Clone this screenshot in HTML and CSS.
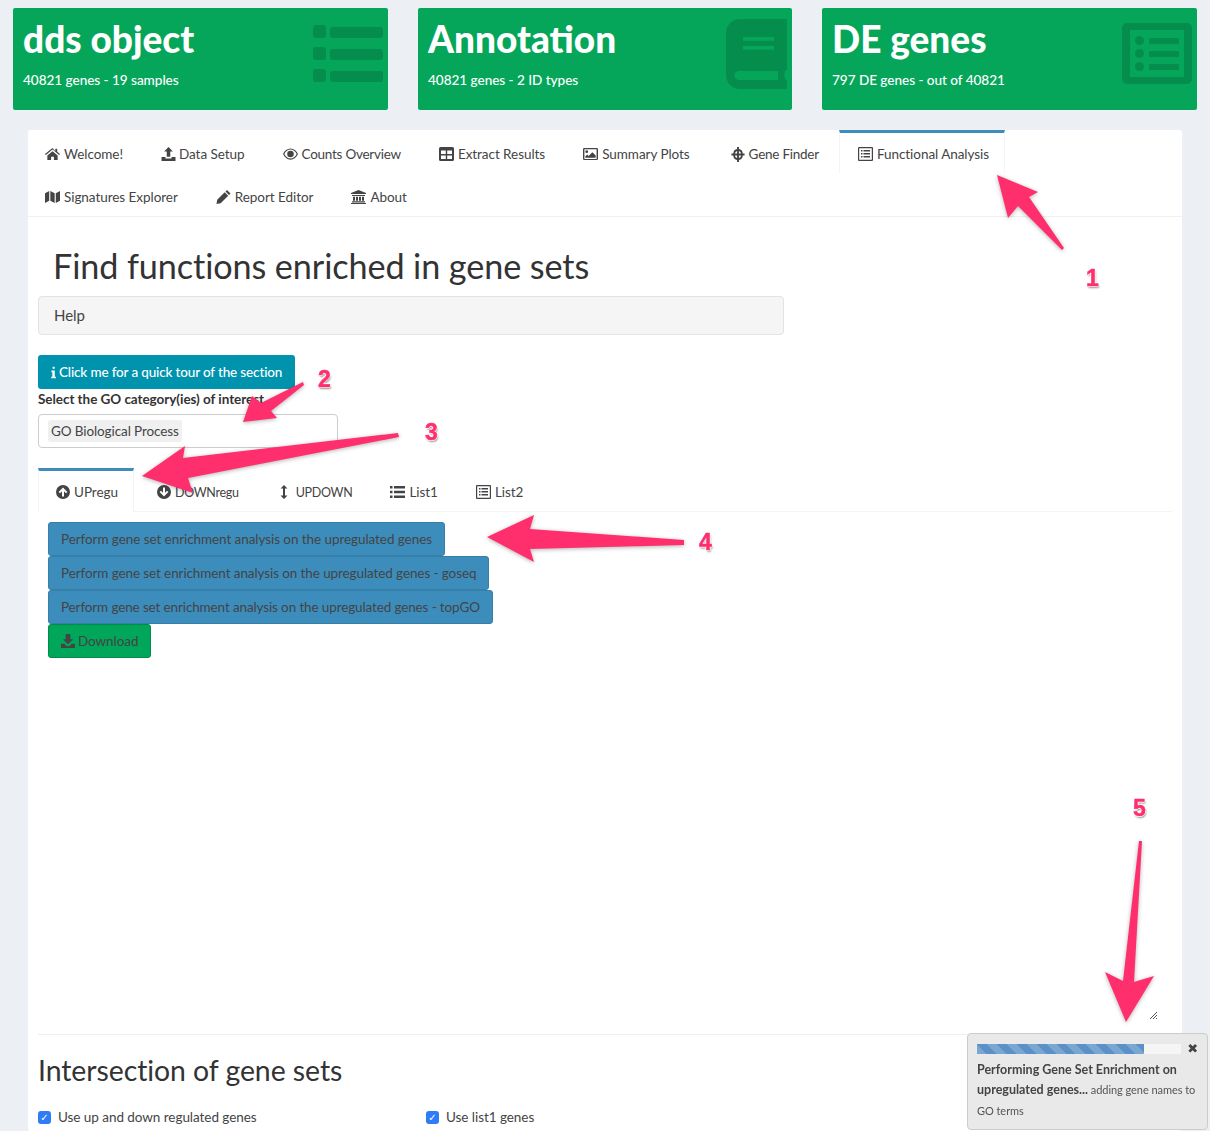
FILE: index.html
```html
<!DOCTYPE html>
<html lang="en">
<head>
<meta charset="utf-8">
<title>Functional Analysis</title>
<link rel="stylesheet" href="styles.css">
</head>
<body>
<svg width="0" height="0" class="defs">
  <defs>
    <symbol id="i-home" viewBox="0 0 16 13"><path d="M8 0 0 6.600l.9 1L8 1.800l7.100 5.800.9-1-3-2.400V.8h-2v2.700zM2.500 8v5h4V9.500h3V13h4V8L8 3.500z"/></symbol>
    <symbol id="i-upload" viewBox="0 0 16 16"><path d="M8 0l5 5.200H10V11H6V5.200H3zM0 11.500h4.500V13h7v-1.500H16V16H0z"/></symbol>
    <symbol id="i-eye" viewBox="0 0 16 12"><path fill-rule="evenodd" d="M8 0c3.500 0 6.400 2.300 8 6-1.600 3.700-4.500 6-8 6s-6.400-2.300-8-6c1.600-3.700 4.500-6 8-6zM8 1.200C5.200 1.200 3 3 1.400 6c1.600 3 3.800 4.800 6.600 4.800S13 9 14.600 6C13 3 10.800 1.200 8 1.200zM8 2.500a3.500 3.500 0 1 1 0 7 3.500 3.500 0 0 1 0-7z"/></symbol>
    <symbol id="i-table" viewBox="0 0 15 14"><path fill-rule="evenodd" d="M1.500 0h12A1.500 1.500 0 0 1 15 1.500v11a1.500 1.500 0 0 1-1.500 1.500h-12A1.500 1.500 0 0 1 0 12.500v-11A1.500 1.500 0 0 1 1.500 0zM2 3.500V7h4.800V3.500zm6.200 0V7H13V3.500zM2 8.500V12h4.800V8.500zm6.200 0V12H13V8.500z"/></symbol>
    <symbol id="i-image" viewBox="0 0 16 13"><path fill-rule="evenodd" d="M1.500 0h13A1.500 1.500 0 0 1 16 1.500v10a1.500 1.500 0 0 1-1.500 1.500h-13A1.500 1.500 0 0 1 0 11.500v-10A1.500 1.500 0 0 1 1.500 0zm0 1.300v10.400h13V1.300zM4 2.500a1.500 1.500 0 1 1 0 3 1.500 1.500 0 0 1 0-3zM13.500 10.500h-11V9l2-2 1.500 1.500L10 4.500l3.500 3.500z"/></symbol>
    <symbol id="i-cross" viewBox="0 0 14 16"><path fill-rule="evenodd" d="M6 0h2v2.100A5 5 0 0 1 12 6.500V7h2v2h-2v.5a5 5 0 0 1-4 4.400V16H6v-2.100a5 5 0 0 1-4-4.400V9H0V7h2v-.5a5 5 0 0 1 4-4.400zM6 4.200A3.500 3.500 0 0 0 3.700 7H6zm2 0V7h2.300A3.500 3.500 0 0 0 8 4.200zM3.700 9A3.500 3.500 0 0 0 6 11.800V9zM8 9v2.800A3.500 3.500 0 0 0 10.300 9z"/></symbol>
    <symbol id="i-listalt" viewBox="0 0 15 14"><path fill-rule="evenodd" d="M1 0h13a1 1 0 0 1 1 1v12a1 1 0 0 1-1 1H1a1 1 0 0 1-1-1V1a1 1 0 0 1 1-1zm.2 1.200v11.600h12.600V1.200zM3 3h1.500v1.500H3zm2.500 0H12v1.500H5.500zM3 6h1.500v1.500H3zm2.500 0H12v1.500H5.500zM3 9h1.500v1.500H3zm2.500 0H12v1.500H5.500z"/></symbol>
    <symbol id="i-map" viewBox="0 0 16 13"><path d="M0 2.500 4.500 0v10.500L0 13zM5.700 0l4.600 2.500V13l-4.600-2.500zM11.500 2.500 16 0v10.500L11.500 13z"/></symbol>
    <symbol id="i-pencil" viewBox="0 0 14 14"><path d="M10.500 0 14 3.500l-1.500 1.500L9 1.500zM8.200 2.300l3.500 3.500-7.500 7.500L0 14l.7-4.200z"/></symbol>
    <symbol id="i-bank" viewBox="0 0 15 14"><path d="M7.500 0 15 3v1H0V3zM1 5h13v1H1zM2 6.700h2v4H2zM5 6.700h2v4H5zM8 6.700h2v4H8zM11 6.700h2v4h-2zM1 11.200h13V12.500H1zM0 13h15v1H0z"/></symbol>
    <symbol id="i-info" viewBox="0 0 6 14"><path d="M2 0h2.400v2.500H2zM.5 4.700h4V12H6v2H.2v-2h1.400V6.700H.5z"/></symbol>
    <symbol id="i-aup" viewBox="0 0 14 14"><path fill-rule="evenodd" d="M7 0a7 7 0 1 1 0 14A7 7 0 0 1 7 0zm0 2.500L2.600 6.900 4 8.300l2-2V11.500h2V6.300l2 2 1.400-1.400z"/></symbol>
    <symbol id="i-adown" viewBox="0 0 14 14"><path fill-rule="evenodd" d="M7 14A7 7 0 1 1 7 0a7 7 0 0 1 0 14zm0-2.500 4.400-4.400L10 5.700l-2 2V2.500H6v5.200l-2-2L2.600 7.100z"/></symbol>
    <symbol id="i-vert" viewBox="0 0 8 14"><path d="M4 0l3.500 3.500H5v7h2.500L4 14 .5 10.500H3v-7H.5z"/></symbol>
    <symbol id="i-list" viewBox="0 0 15 12"><path d="M0 0h2.500v2.500H0zM4 0h11v2.500H4zM0 4.700h2.500v2.500H0zM4 4.700h11v2.500H4zM0 9.400h2.500V12H0zM4 9.400h11V12H4z"/></symbol>
    <symbol id="i-download" viewBox="0 0 15 15"><path d="M5 0h5v5.500h3L7.500 11 2 5.500h3zM0 10.500h3.500L6 13h3l2.500-2.500H15V15H0z"/></symbol>
    <symbol id="i-thlist" viewBox="0 0 70 57"><path d="M3 0h7a3 3 0 0 1 3 3v7a3 3 0 0 1-3 3H3a3 3 0 0 1-3-3V3a3 3 0 0 1 3-3zM20 2h47a3 3 0 0 1 3 3v5a3 3 0 0 1-3 3H20a3 3 0 0 1-3-3V5a3 3 0 0 1 3-3zM3 22h7a3 3 0 0 1 3 3v7a3 3 0 0 1-3 3H3a3 3 0 0 1-3-3v-7a3 3 0 0 1 3-3zM20 24h47a3 3 0 0 1 3 3v5a3 3 0 0 1-3 3H20a3 3 0 0 1-3-3v-5a3 3 0 0 1 3-3zM3 44h7a3 3 0 0 1 3 3v7a3 3 0 0 1-3 3H3a3 3 0 0 1-3-3v-7a3 3 0 0 1 3-3zM20 46h47a3 3 0 0 1 3 3v5a3 3 0 0 1-3 3H20a3 3 0 0 1-3-3v-5a3 3 0 0 1 3-3z"/></symbol>
    <symbol id="i-book" viewBox="0 0 61 70"><path fill-rule="evenodd" d="M14 0h47v51h-1.500c-1.500 3-1.500 7 0 10H61v9H14A14 14 0 0 1 0 56V14A14 14 0 0 1 14 0zM17 18v3.800h31V18zm0 9v3.800h31V27zm-4 25a4.500 4.500 0 0 0 0 9h39v-9z"/></symbol>
    <symbol id="i-listbig" viewBox="0 0 70 61"><path fill-rule="evenodd" d="M5 0h60a5 5 0 0 1 5 5v51a5 5 0 0 1-5 5H5a5 5 0 0 1-5-5V5a5 5 0 0 1 5-5zm3 7v47h54V7zM17.500 13a4.500 4.500 0 1 1 0 9 4.500 4.500 0 0 1 0-9zM28 15h28a1 1 0 0 1 1 1v4a1 1 0 0 1-1 1H28a1 1 0 0 1-1-1v-4a1 1 0 0 1 1-1zM17.500 26a4.500 4.500 0 1 1 0 9 4.500 4.500 0 0 1 0-9zM28 28h28a1 1 0 0 1 1 1v4a1 1 0 0 1-1 1H28a1 1 0 0 1-1-1v-4a1 1 0 0 1 1-1zM17.500 39a4.500 4.500 0 1 1 0 9 4.500 4.500 0 0 1 0-9zM28 41h28a1 1 0 0 1 1 1v4a1 1 0 0 1-1 1H28a1 1 0 0 1-1-1v-4a1 1 0 0 1 1-1z"/></symbol>
  </defs>
</svg>

<div class="page">
  <section class="cards">
    <div class="card">
      <div class="card-text"><h3>dds object</h3><p>40821 genes - 19 samples</p></div>
      <svg class="card-icon ci-list"><use href="#i-thlist"/></svg>
    </div>
    <div class="card">
      <div class="card-text"><h3>Annotation</h3><p>40821 genes - 2 ID types</p></div>
      <svg class="card-icon ci-book"><use href="#i-book"/></svg>
    </div>
    <div class="card">
      <div class="card-text"><h3>DE genes</h3><p>797 DE genes - out of 40821</p></div>
      <svg class="card-icon ci-big"><use href="#i-listbig"/></svg>
    </div>
  </section>

  <main class="box">
    <nav class="nav">
      <a class="tab"><svg class="ic ic-15"><use href="#i-home"/></svg>Welcome!</a>
      <a class="tab"><svg class="ic ic-15 ic-snug"><use href="#i-upload"/></svg>Data Setup</a>
      <a class="tab tab-tight"><svg class="ic ic-15"><use href="#i-eye"/></svg>Counts Overview</a>
      <a class="tab"><svg class="ic ic-15"><use href="#i-table"/></svg>Extract Results</a>
      <a class="tab"><svg class="ic ic-15"><use href="#i-image"/></svg>Summary Plots</a>
      <a class="tab tab-tight"><svg class="ic ic-13"><use href="#i-cross"/></svg>Gene Finder</a>
      <a class="tab active"><svg class="ic ic-15"><use href="#i-listalt"/></svg>Functional Analysis</a>
      <a class="tab"><svg class="ic ic-15"><use href="#i-map"/></svg>Signatures Explorer</a>
      <a class="tab"><svg class="ic ic-15"><use href="#i-pencil"/></svg>Report Editor</a>
      <a class="tab"><svg class="ic ic-15"><use href="#i-bank"/></svg>About</a>
    </nav>

    <div class="content">
      <h1>Find functions enriched in gene sets</h1>
      <div class="help">Help</div>
      <button class="btn btn-tour"><svg class="ic-info"><use href="#i-info"/></svg>Click me for a quick tour of the section</button>
      <label class="field-label">Select the GO category(ies) of interest</label>
      <div class="select"><span class="chip">GO Biological Process</span></div>

      <nav class="subnav">
        <a class="subtab active"><svg class="ic ic-14"><use href="#i-aup"/></svg>UPregu</a>
        <a class="subtab caps"><svg class="ic ic-14"><use href="#i-adown"/></svg>DOWNregu</a>
        <a class="subtab caps"><svg class="ic ic-8"><use href="#i-vert"/></svg>UPDOWN</a>
        <a class="subtab"><svg class="ic ic-15"><use href="#i-list"/></svg>List1</a>
        <a class="subtab"><svg class="ic ic-15"><use href="#i-listalt"/></svg>List2</a>
      </nav>

      <div class="actions">
        <button class="btn btn-blue">Perform gene set enrichment analysis on the upregulated genes</button>
        <button class="btn btn-blue btn-goseq">Perform gene set enrichment analysis on the upregulated genes - goseq</button>
        <button class="btn btn-blue btn-topgo">Perform gene set enrichment analysis on the upregulated genes - topGO</button>
        <button class="btn btn-green"><svg class="ic-dl"><use href="#i-download"/></svg>Download</button>
      </div>

      <div class="output"><span class="grip"></span></div>

      <h2>Intersection of gene sets</h2>
      <div class="checks">
        <label class="check"><span class="cb">✓</span>Use up and down regulated genes</label>
        <label class="check"><span class="cb">✓</span>Use list1 genes</label>
      </div>
    </div>
  </main>
</div>

<aside class="notify">
  <div class="notify-top"><div class="progress"><div class="bar"></div></div><span class="close">✖</span></div>
  <div class="notify-msg"><b>Performing Gene Set Enrichment on upregulated genes...</b> adding gene names to GO terms</div>
</aside>

<svg class="arrows" viewBox="0 0 1210 1131">
  <polygon points="997,175 1038,192 1029,197 1064,248 1062,250 1018,206 1008,218"/>
  <polygon points="243,422 252,396 261,403 303,382 304,385 271,411 277,418"/>
  <polygon points="142,476 185,446 183,458 398,433 399,437 188,478 193,493"/>
  <polygon points="487,537 534,515 530,529 684,540 684,545 530,549 534,562"/>
  <polygon points="1126,1022 1105,972 1123,981 1139,841 1142,841 1134,982 1154,976"/>
</svg>
<span class="num n1">1</span>
<span class="num n2">2</span>
<span class="num n3">3</span>
<span class="num n4">4</span>
<span class="num n5">5</span>
</body>
</html>
```

FILE: styles.css
```css
* { box-sizing: border-box; }
html, body { margin: 0; height: 1131px; overflow: hidden; }
body { background: #ecf0f5; font-family: "Lato", "Noto Sans", sans-serif; font-size: 13.5px; letter-spacing: -.05px; color: #444; position: relative; }
.defs { position: absolute; }
.page { padding: 8px 13px 0; }

.cards { display: grid; grid-template-columns: 375px 374px 375px; gap: 30px; }
.card { height: 102px; background: #05a65a; border-radius: 2px; color: #fff; display: flex; justify-content: space-between; align-items: flex-start; padding: 9px 5px 0 10px; }
.card h3 { margin: 0; font-size: 37px; line-height: 43px; font-weight: 900; letter-spacing: 0; }
.card p { margin: 10px 0 0; font-size: 13.6px; line-height: 20px; font-weight: 500; }
.card-icon { fill: rgba(0,0,0,.15); flex: none; }
.ci-list { width: 70px; height: 57px; margin-top: 8px; }
.ci-book { width: 61px; height: 70px; margin-top: 2px; }
.ci-big { width: 70px; height: 61px; margin-top: 6px; }

.box { margin: 20px 15px 0; background: #fff; border-radius: 3px; height: 1001px; }
.nav { display: flex; flex-wrap: wrap; margin-left: -1px; padding-right: 100px; border-bottom: 1px solid #f0f0f0; height: 87px; align-content: flex-start; }
.tab { height: 43px; display: flex; align-items: center; padding: 2px 16px 0 17px; margin-right: 3px; color: #444; border: 1px solid transparent; border-top: 3px solid transparent; border-bottom: 0; }
.tab-tight { letter-spacing: -.25px; }
.tab.active { border-top-color: #3c8dbc; border-left-color: #f4f4f4; border-right-color: #f4f4f4; padding-left: 18px; padding-right: 15px; }
.ic { fill: #444; margin-right: 4px; flex: none; height: 14px; }
.ic-15 { width: 15px; }
.ic-snug { margin-right: 3px; }
.ic-14 { width: 14px; margin-right: 4px; height: 14px; }
.ic-13 { width: 14px; height: 15px; margin-left: 3px; margin-right: 4px; }
.ic-8 { width: 8px; margin-left: 3px; margin-right: 8px; }

.content { padding: 0 10px; }
h1 { margin: 28px 0 0 15px; font-size: 34.2px; line-height: 42px; font-weight: 400; color: #333; letter-spacing: -.1px; }
.help { margin-top: 9px; width: 746px; height: 39px; background: #f5f5f5; border: 1px solid #e3e3e3; border-radius: 4px; padding: 8px 15px; font-size: 15px; line-height: 20px; }
.btn { display: block; font-family: inherit; font-size: 13.5px; letter-spacing: -.07px; height: 34px; border-radius: 3px; border: 1px solid transparent; padding: 0 12px; }
.btn-tour { margin-top: 20px; width: 257px; background: #0093ae; color: #fff; white-space: nowrap; font-weight: 500; letter-spacing: -.15px; }
.ic-info { width: 5px; height: 13px; fill: #fff; margin-right: 3px; vertical-align: -2px; }
.field-label { display: block; font-weight: 700; color: #333; line-height: 20px; }
.select { margin-top: 5px; width: 300px; height: 34px; border: 1px solid #ccc; border-radius: 4px; padding: 5px 9px; }
.chip { display: inline-block; background: #f0f0f0; border-radius: 3px; padding: 0 3px; line-height: 22px; letter-spacing: -.1px; }

.subnav { display: flex; margin-top: 20px; height: 44px; border-bottom: 1px solid #f4f4f4; }
.subtab { display: flex; align-items: center; padding: 0 16px 0 17px; margin-right: 3px; border-top: 3px solid transparent; border-left: 1px solid transparent; border-right: 1px solid transparent; height: 44px; }
.caps { font-size: 12.5px; letter-spacing: -.3px; padding-top: 1px; }
.subtab.active { border-top-color: #3c8dbc; border-left-color: #f4f4f4; border-right-color: #f4f4f4; padding-right: 15px; margin-right: 5px; background: #fff; }

.actions { margin: 10px 0 0 10px; }
.btn-blue { background: #3c8dbc; border-color: #367fa9; color: #444; }
.btn-goseq { letter-spacing: -.1px; }
.btn-topgo { letter-spacing: -.13px; }
.btn-green { background: #00a65a; border-color: #008d4c; color: #444; }
.ic-dl { width: 14px; height: 14px; fill: #444; margin-right: 3px; vertical-align: -2px; }

.output { height: 377px; position: relative; border-bottom: 1px solid #eee; }
.grip { position: absolute; right: 15px; bottom: 15px; width: 8px; height: 8px; background: repeating-linear-gradient(135deg, #555 0 1px, transparent 1px 2px); clip-path: polygon(100% 0, 100% 100%, 0 100%); }

h2 { margin: 17px 0 0; font-size: 28.4px; line-height: 36px; font-weight: 400; color: #333; }
.checks { display: grid; grid-template-columns: 388px 1fr; margin-top: 19px; }
.check { display: flex; align-items: center; line-height: 20px; }
.cb { width: 13px; height: 13px; background: #2f7cf6; color: #fff; border-radius: 3px; font-size: 10px; line-height: 13px; text-align: center; font-weight: 700; margin: 0 7px 0 0; font-family: "DejaVu Sans", sans-serif; }

.notify { position: fixed; left: 967px; top: 1033px; width: 241px; height: 97px; background: rgba(232,232,232,.96); border: 1px solid #ccc; border-radius: 4px; padding: 10px 9px; font-size: 11px; line-height: 20.5px; color: #555; }
.notify-top { display: flex; align-items: center; gap: 6px; }
.progress { width: 208px; height: 10px; background: #f5f5f5; }
.bar { width: 167px; height: 10px; background: repeating-linear-gradient(45deg, #7aa6d2 0 7px, #5b91c6 7px 14px); }
.close { font-size: 13px; line-height: 10px; color: #444; font-family: "DejaVu Sans", sans-serif; }
.notify-msg { margin-top: 5.5px; }
.notify-msg b { color: #444; font-size: 12.5px; letter-spacing: 0; }

.arrows { position: fixed; left: 0; top: 0; width: 1210px; height: 1131px; fill: #ff2f6e; filter: drop-shadow(0 1px 2px rgba(0,0,0,.3)); pointer-events: none; }
.num { position: fixed; font-family: "Liberation Sans", sans-serif; font-weight: 700; font-size: 23px; line-height: 26px; color: #ff2f6e; -webkit-text-stroke: .5px #ff2f6e; text-shadow: -1px 0 #fff, 1px 0 #fff, 0 -1px #fff, 0 1px #fff, 1px 2px 2px rgba(0,0,0,.4); }
.n1 { left: 1086px; top: 265px; }
.n2 { left: 318px; top: 366px; }
.n3 { left: 425px; top: 419px; }
.n4 { left: 699px; top: 529px; }
.n5 { left: 1133px; top: 795px; }
```
